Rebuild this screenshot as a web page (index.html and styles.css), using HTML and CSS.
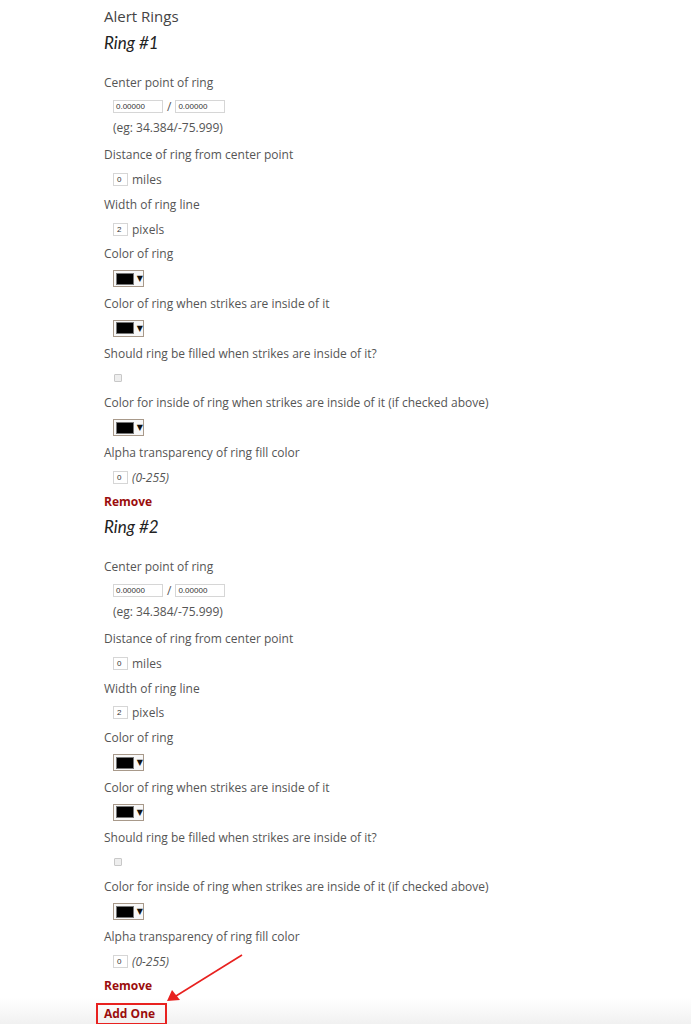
FILE: index.html
```html
<!DOCTYPE html>
<html>
<head>
<meta charset="utf-8">
<link rel="stylesheet" href="styles.css">
</head>
<body>
<div class="page">
  <div class="section-title">Alert Rings</div>

  <div class="ring">
    <div class="ring-title">Ring #1</div>
    <div class="label first">Center point of ring</div>
    <div class="ctrl pair"><span class="txt wide">0.00000</span><span class="slash">/</span><span class="txt wide">0.00000</span></div>
    <div class="ctrl eg">(eg: 34.384/-75.999)</div>
    <div class="label">Distance of ring from center point</div>
    <div class="ctrl"><span class="txt small">0</span><span class="unit">miles</span></div>
    <div class="label">Width of ring line</div>
    <div class="ctrl"><span class="txt small">2</span><span class="unit">pixels</span></div>
    <div class="label">Color of ring</div>
    <div class="ctrl"><span class="color"><span class="swatch"></span><span class="caret">▼</span></span></div>
    <div class="label">Color of ring when strikes are inside of it</div>
    <div class="ctrl"><span class="color"><span class="swatch"></span><span class="caret">▼</span></span></div>
    <div class="label">Should ring be filled when strikes are inside of it?</div>
    <div class="ctrl"><span class="check"></span></div>
    <div class="label">Color for inside of ring when strikes are inside of it (if checked above)</div>
    <div class="ctrl"><span class="color"><span class="swatch"></span><span class="caret">▼</span></span></div>
    <div class="label">Alpha transparency of ring fill color</div>
    <div class="ctrl"><span class="txt small">0</span><span class="unit it">(0-255)</span></div>
    <div class="remove">Remove</div>
  </div>

  <div class="ring">
    <div class="ring-title">Ring #2</div>
    <div class="label first">Center point of ring</div>
    <div class="ctrl pair"><span class="txt wide">0.00000</span><span class="slash">/</span><span class="txt wide">0.00000</span></div>
    <div class="ctrl eg">(eg: 34.384/-75.999)</div>
    <div class="label">Distance of ring from center point</div>
    <div class="ctrl"><span class="txt small">0</span><span class="unit">miles</span></div>
    <div class="label">Width of ring line</div>
    <div class="ctrl"><span class="txt small">2</span><span class="unit">pixels</span></div>
    <div class="label">Color of ring</div>
    <div class="ctrl"><span class="color"><span class="swatch"></span><span class="caret">▼</span></span></div>
    <div class="label">Color of ring when strikes are inside of it</div>
    <div class="ctrl"><span class="color"><span class="swatch"></span><span class="caret">▼</span></span></div>
    <div class="label">Should ring be filled when strikes are inside of it?</div>
    <div class="ctrl"><span class="check"></span></div>
    <div class="label">Color for inside of ring when strikes are inside of it (if checked above)</div>
    <div class="ctrl"><span class="color"><span class="swatch"></span><span class="caret">▼</span></span></div>
    <div class="label">Alpha transparency of ring fill color</div>
    <div class="ctrl"><span class="txt small">0</span><span class="unit it">(0-255)</span></div>
    <div class="remove">Remove</div>
  </div>

  <div class="add-row"><span class="add-one">Add One</span></div>
</div>

<svg class="arrow" width="691" height="1024" viewBox="0 0 691 1024">
  <line x1="242" y1="955" x2="176" y2="996" stroke="#e8211f" stroke-width="1.6"/>
  <polygon points="167,1001 172,990 180,1000" fill="#e8211f"/>
</svg>
</body>
</html>
```

FILE: styles.css
```css
html {
  background: linear-gradient(to bottom, #ffffff 0, #ffffff 998px, #f1f1f1 1024px) no-repeat;
  min-height: 100%;
}
body {
  margin: 0;
  font-family: "Open Sans", "Liberation Sans", sans-serif;
  color: #555;
  font-size: 12px;
}
.page {
  padding: 5px 0 0 104px;
}
.section-title {
  font-size: 15px;
  line-height: 22px;
  color: #444;
  margin-bottom: 3px;
}
.ring-title {
  font-family: "Lato", "Open Sans", sans-serif;
  font-style: italic;
  font-size: 17px;
  line-height: 26px;
  color: #222;
}
.label {
  height: 25px;
  line-height: 25px;
  white-space: nowrap;
}
.label.first {
  margin-top: 14px;
}
.ctrl {
  height: 24.7px;
  display: flex;
  align-items: center;
  padding-left: 9px;
}
.ctrl.pair {
  height: 23px;
}
.ctrl.eg {
  height: 19px;
  margin-bottom: 5px;
}
.txt {
  display: inline-block;
  box-sizing: border-box;
  height: 13px;
  border: 1px solid #d6d6d6;
  background: #fff;
  font-size: 8px;
  line-height: 11px;
  padding-left: 2px;
  color: #333;
  font-family: "Liberation Sans", sans-serif;
}
.txt.wide {
  width: 50px;
}
.txt.small {
  width: 15px;
  padding-left: 3px;
}
.slash {
  margin: 0 4px;
  font-size: 12px;
}
.unit {
  margin-left: 4px;
}
.unit.it {
  font-style: italic;
}
.color {
  display: inline-flex;
  align-items: center;
  box-sizing: border-box;
  width: 31px;
  height: 17px;
  border: 1px solid #a8998a;
  background: #f8f8f8;
  padding-left: 2px;
}
.swatch {
  width: 16px;
  height: 10px;
  background: #000;
  border: 1px solid #777;
}
.caret {
  font-size: 8px;
  margin-left: 3px;
  color: #111;
  font-family: "DejaVu Sans", sans-serif;
}
.check {
  display: inline-block;
  width: 6px;
  height: 6px;
  border: 1px solid #c8c8c8;
  border-radius: 1px;
  background: #eee;
  margin-left: 1px;
}
.remove {
  font-weight: 700;
  color: #9b0d0d;
  height: 24px;
  line-height: 24px;
}
.add-row {
  margin-top: 5px;
  margin-left: -8px;
}
.add-one {
  display: inline-block;
  box-sizing: border-box;
  border: 2px solid #e8211f;
  padding: 0 10px 0 6px;
  height: 22px;
  line-height: 18px;
  font-weight: 700;
  color: #9b0d0d;
}
.arrow {
  position: absolute;
  left: 0;
  top: 0;
  pointer-events: none;
}
```
